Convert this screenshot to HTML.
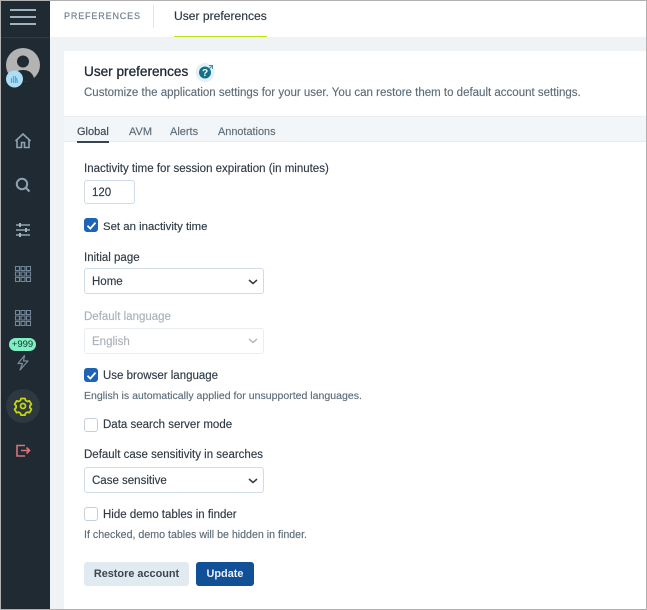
<!DOCTYPE html>
<html><head><meta charset="utf-8">
<style>
html,body{margin:0;padding:0;width:647px;height:610px;overflow:hidden;background:#fff}
body{position:relative;font-family:"Liberation Sans",sans-serif;color:#2a3640}
.a{position:absolute}
.t{position:absolute;white-space:nowrap;line-height:16px;font-size:11.500px;color:#2f3b46;-webkit-text-stroke:.15px currentColor}
.sel{position:absolute;left:84px;width:178px;height:24px;border:1px solid #cfdbe6;border-radius:3px;background:#fff}
.sel span{position:absolute;left:7px;top:5px;font-size:11.500px;line-height:16px;color:#2f3b46;-webkit-text-stroke:.15px currentColor}
.cb{position:absolute;left:84px;width:12px;height:12px;border:1.500px solid #c3d1de;border-radius:3px;background:#fff}
.cb.on{background:#1f63b5;border-color:#1f63b5}
svg{position:absolute;overflow:visible}
</style></head><body>
<div class="a" style="left:0;top:0;width:647px;height:610px;background:#fff"></div>
<div class="a" style="left:50px;top:37px;width:596px;height:572px;background:#eff3f6"></div>
<div class="a" style="left:64px;top:51px;width:582px;height:558px;background:#fff"></div>
<div class="a" style="left:64px;top:116px;width:582px;height:26px;background:#f3f6f9;border-top:1px solid #ebeff3;border-bottom:1px solid #e6ebf0;box-sizing:border-box"></div>

<!-- sidebar -->
<div class="a" style="left:1px;top:0;width:49px;height:609px;background:#1f2a33"></div>
<div class="a" style="left:1px;top:37px;width:49px;height:1px;background:#2e3a44"></div>
<div class="a" style="left:10px;top:9px;width:26px;height:2px;background:#9fb2c0"></div>
<div class="a" style="left:10px;top:16px;width:26px;height:2px;background:#9fb2c0"></div>
<div class="a" style="left:10px;top:23px;width:26px;height:2px;background:#9fb2c0"></div>

<svg style="left:0;top:0" width="50" height="610" viewBox="0 0 50 610">
<circle cx="23" cy="65" r="17" fill="#b3b3b3"/>
<circle cx="23" cy="61.500" r="6" fill="#1f2a33"/>
<path d="M12 78c2-6 6-8 11-8s9 2 11 8c-3 3-7 4-11 4s-8-1-11-4z" fill="#1f2a33"/>
<circle cx="14.500" cy="79" r="8.500" fill="#a9e0f7"/>
<path d="M11.500 83v-5M13.500 83v-7M15.500 83v-7M17.500 83l-1-5" stroke="#6f9fc0" stroke-width="1.200" fill="none"/>
<g fill="none" stroke="#8ea3b2" stroke-width="1.600">
<path d="M15.500 141l7.500-7 7.500 7M17 139.500v8h4.500v-5h3v5H29v-8"/>
<circle cx="22" cy="184" r="5.200" stroke-width="2"/><path d="M26 188l3.500 3.500" stroke-width="2.200"/>
<path d="M16 225h14M16 230h14M16 235h14" stroke-width="1.400"/>
</g>
<path d="M20 223v4M26 228v4M20 233v4" stroke="#a5b6c2" stroke-width="2"/>
<g fill="none" stroke="#74879a" stroke-width="1.100">
<path d="M15.500 266.500h4v4h-4zM21 266.500h4v4h-4zM26.500 266.500h4v4h-4zM15.500 272h4v4h-4zM21 272h4v4h-4zM26.500 272h4v4h-4zM15.500 277.500h4v4h-4zM21 277.500h4v4h-4zM26.500 277.500h4v4h-4z"/>
<path d="M15.500 310.500h4v4h-4zM21 310.500h4v4h-4zM26.500 310.500h4v4h-4zM15.500 316h4v4h-4zM21 316h4v4h-4zM26.500 316h4v4h-4zM15.500 321.500h4v4h-4zM21 321.500h4v4h-4zM26.500 321.500h4v4h-4z"/>
<path d="M24.500 355.500L18 363.500h4.500L20 370l8-9h-4.500z" stroke="#7a8b99" stroke-width="1.200" stroke-linejoin="round"/>
</g>
<circle cx="23" cy="406" r="17" fill="#2e3840"/>
<circle cx="23" cy="406" r="2.500" fill="none" stroke="#c6d60f" stroke-width="1.800"/>
<path d="M21 398.500h4l.6 2 1.800 1 2-.6 2 3.400-1.500 1.500v2l1.500 1.500-2 3.400-2-.6-1.800 1-.6 2h-4l-.6-2-1.800-1-2 .6-2-3.400 1.500-1.500v-2l-1.500-1.500 2-3.400 2 .6 1.800-1z" fill="none" stroke="#c6d60f" stroke-width="1.800" stroke-linejoin="round"/>
<path d="M25 445.500h-8v10.500h8M21 450.500h8.500M26.500 447.500l3 3-3 3" fill="none" stroke="#d9737d" stroke-width="1.600"/>
</svg>
<div class="a" style="left:9px;top:338px;width:27px;height:13px;border-radius:7px;background:#7ef0c4;color:#15302a;font-size:9.500px;line-height:13px;text-align:center">+999</div>

<!-- top bar -->
<div class="t" style="left:64px;top:8px;font-size:9px;letter-spacing:.85px;color:#74828e;-webkit-text-stroke:.2px #74828e">PREFERENCES</div>
<div class="a" style="left:153px;top:5px;width:1px;height:23px;background:#dfe5ea"></div>
<div class="t" style="left:174px;top:8px;font-size:12.100px;color:#2a3640">User preferences</div>
<div class="a" style="left:174px;top:36px;width:93px;height:1px;background:#c8dc14"></div>

<!-- header -->
<div class="t" style="left:84px;top:64px;font-size:13.600px;color:#1f2a33;-webkit-text-stroke:.3px #1f2a33">User preferences</div>
<svg style="left:195px;top:62px" width="20" height="20" viewBox="0 0 20 20">
<circle cx="10" cy="10.500" r="9.500" fill="#e3f1f5"/><circle cx="10" cy="10.500" r="6" fill="#17708a"/>
<path d="M14 3.500h3.500V7M17.500 3.500L14.500 6.500" stroke="#3d93aa" fill="none"/>
<text x="10" y="14" font-size="10" font-weight="bold" fill="#fff" text-anchor="middle" font-family="Liberation Sans">?</text>
</svg>
<div class="t" style="left:84px;top:85px;font-size:11.500px;color:#5e6d79">Customize the application settings for your user. You can restore them to default account settings.</div>

<!-- tabs -->
<div class="t" style="left:77px;top:124px;font-size:11px;color:#3a4651">Global</div>
<div class="a" style="left:77px;top:141px;width:32px;height:2px;background:#38444f"></div>
<div class="t" style="left:129px;top:124px;font-size:11px;color:#5e6d79">AVM</div>
<div class="t" style="left:170px;top:124px;font-size:11px;color:#5e6d79">Alerts</div>
<div class="t" style="left:218px;top:124px;font-size:10.900px;color:#5e6d79">Annotations</div>

<!-- form -->
<div class="t" style="left:84px;top:161px">Inactivity time for session expiration (in minutes)</div>
<div class="sel" style="top:180px;width:49px;height:22px"><span style="top:4px">120</span></div>

<div class="cb on" style="top:218px"></div>
<svg style="left:84px;top:218px" width="15" height="15" viewBox="0 0 15 15"><path d="M3.500 7.800l2.800 2.800 5.200-6" stroke="#fff" stroke-width="1.800" fill="none"/></svg>
<div class="t" style="left:103px;top:219px;font-size:11.400px">Set an inactivity time</div>

<div class="t" style="left:84px;top:250px">Initial page</div>
<div class="sel" style="top:268px"><span>Home</span></div>
<svg style="left:248px;top:279px" width="10" height="6" viewBox="0 0 10 6"><path d="M1 1l4 3.500L9 1" stroke="#2f3b46" stroke-width="1.500" fill="none"/></svg>

<div class="t" style="left:84px;top:309px;color:#a9b2b9">Default language</div>
<div class="sel" style="top:328px;border-color:#e8edf1"><span style="color:#a9b2b9">English</span></div>
<svg style="left:248px;top:338px" width="10" height="6" viewBox="0 0 10 6"><path d="M1 1l4 3.500L9 1" stroke="#a9b2b9" stroke-width="1.300" fill="none"/></svg>

<div class="cb on" style="top:368px"></div>
<svg style="left:84px;top:368px" width="15" height="15" viewBox="0 0 15 15"><path d="M3.500 7.800l2.800 2.800 5.200-6" stroke="#fff" stroke-width="1.800" fill="none"/></svg>
<div class="t" style="left:103px;top:368px">Use browser language</div>
<div class="t" style="left:84px;top:388px;font-size:10.550px;color:#5e6d79">English is automatically applied for unsupported languages.</div>

<div class="cb" style="top:418px"></div>
<div class="t" style="left:103px;top:417px">Data search server mode</div>

<div class="t" style="left:84px;top:447px">Default case sensitivity in searches</div>
<div class="sel" style="top:467px"><span>Case sensitive</span></div>
<svg style="left:248px;top:478px" width="10" height="6" viewBox="0 0 10 6"><path d="M1 1l4 3.500L9 1" stroke="#2f3b46" stroke-width="1.500" fill="none"/></svg>

<div class="cb" style="top:507px"></div>
<div class="t" style="left:103px;top:507px">Hide demo tables in finder</div>
<div class="t" style="left:84px;top:527px;font-size:10.650px;color:#5e6d79">If checked, demo tables will be hidden in finder.</div>

<div class="a" style="left:84px;top:562px;width:105px;height:24px;border-radius:3px;background:#e2eaf1;color:#3a4651;font-size:10.900px;font-weight:bold;line-height:25px;text-align:center">Restore account</div>
<div class="a" style="left:196px;top:562px;width:58px;height:24px;border-radius:3px;background:#114f96;color:#e8f0f8;font-size:10.900px;font-weight:bold;line-height:25px;text-align:center">Update</div>

<!-- frame -->
<div class="a" style="left:0;top:0;width:647px;height:1px;background:#b0b0b0"></div>
<div class="a" style="left:0;top:0;width:1px;height:610px;background:#b0b0b0"></div>
<div class="a" style="left:646px;top:0;width:1px;height:610px;background:#b0b0b0"></div>
<div class="a" style="left:0;top:609px;width:647px;height:1px;background:#b0b0b0"></div>
</body></html>
